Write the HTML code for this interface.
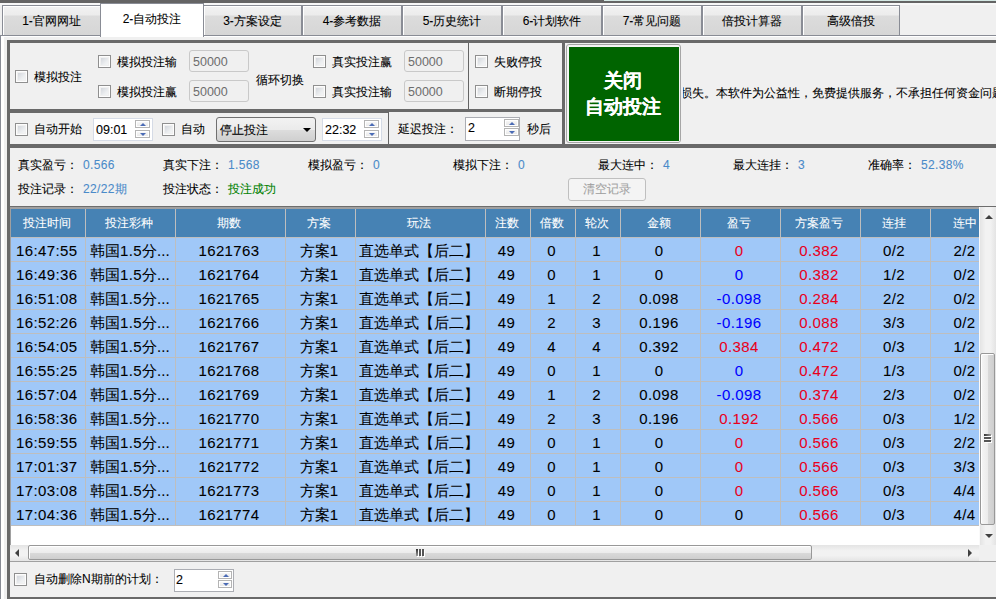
<!DOCTYPE html>
<html><head><meta charset="utf-8">
<style>
*{box-sizing:border-box;margin:0;padding:0}
html,body{width:996px;height:599px;overflow:hidden;background:#f0f0f0;font-family:"Liberation Sans",sans-serif;font-size:12px;color:#000;-webkit-text-stroke:0.08px currentColor}
.a{position:absolute}
.t{position:absolute;white-space:nowrap;line-height:14px}
.tab{position:absolute;top:5px;height:31px;border:1px solid #898c95;border-bottom:1px solid #898c95;background:linear-gradient(#f2f2f2 0,#ececec 9px,#dcdcdc 10px,#d6d6d6 100%);box-shadow:inset 1px 1px 0 #fff;text-align:center;line-height:31px}
.frm{position:absolute;background:#696969}
.cb{position:absolute;width:13px;height:13px;border:1px solid #8f8f8f;background:linear-gradient(135deg,#c8ccd3,#eceef0 60%,#fafafa);box-shadow:inset 0 0 0 1px #fdfdfd,inset 0 0 0 2px #f0f0f0}
.tb{position:absolute;height:22px;border:1px solid #c9c9c9;border-radius:3px;background:#f0f0f0;color:#6d6d6d;font-size:12.5px;line-height:22px;padding-left:3px;-webkit-text-stroke:0}
.spin{position:absolute;border:1px solid #d5dbe6;background:#fff;font-size:12.5px;line-height:22px;padding-left:2px;-webkit-text-stroke:0.1px currentColor}
.sb{position:absolute;width:15px;height:8px;border:1px solid #b4b4b4;background:linear-gradient(#fafafa,#e6e6e6);box-shadow:inset 0 0 0 1px #fff}
.up:after{content:"";position:absolute;left:4px;top:2px;border-left:3px solid transparent;border-right:3px solid transparent;border-bottom:3px solid #4a6bb5}
.dn:after{content:"";position:absolute;left:4px;top:2px;border-left:3px solid transparent;border-right:3px solid transparent;border-top:3px solid #4a6bb5}
.lbl{color:#000}
.val{color:#4a8ac9;letter-spacing:0.35px}
</style></head><body>
<!-- top dark band -->
<div class="a" style="left:0;top:0;width:996px;height:3px;background:#646464"></div>
<div class="a" style="left:0;top:3px;width:996px;height:2px;background:#f7f7f7"></div>
<div class="a" style="left:604px;top:0;width:392px;height:1px;background:#d4e8e4"></div>

<!-- tabs -->
<div class="tab" style="left:2px;width:99px">1-官网网址</div>
<div class="tab" style="left:203px;width:99px">3-方案设定</div>
<div class="tab" style="left:302px;width:100px">4-参考数据</div>
<div class="tab" style="left:402px;width:100px">5-历史统计</div>
<div class="tab" style="left:502px;width:100px">6-计划软件</div>
<div class="tab" style="left:602px;width:100px">7-常见问题</div>
<div class="tab" style="left:702px;width:100px">倍投计算器</div>
<div class="tab" style="left:802px;width:98px">高级倍投</div>
<!-- page border -->
<div class="a" style="left:0;top:35px;width:996px;height:1px;background:#898c95"></div>
<div class="a" style="left:0;top:35px;width:1px;height:564px;background:#898c95"></div>
<div class="a" style="left:1px;top:36px;width:995px;height:1px;background:#fff"></div>
<div class="a" style="left:1px;top:36px;width:3px;height:563px;background:#fff"></div>
<!-- active tab -->
<div class="a" style="left:100px;top:3px;width:104px;height:34px;background:#fff;border:1px solid #898c95;border-bottom:none;text-align:center;line-height:30px">2-自动投注</div>

<!-- top frame -->
<div class="frm" style="left:7px;top:40px;width:989px;height:3px"></div>
<div class="frm" style="left:7px;top:40px;width:3px;height:559px"></div>
<div class="frm" style="left:10px;top:109px;width:552px;height:3px"></div><div class="frm" style="left:10px;top:112px;width:378px;height:1px"></div>
<div class="frm" style="left:562px;top:40px;width:3px;height:107px"></div>
<div class="frm" style="left:7px;top:144px;width:989px;height:4px"></div>
<div class="frm" style="left:7px;top:597px;width:989px;height:2px"></div>


<!-- top panel row1 -->
<div class="cb" style="left:15px;top:70px"></div>
<div class="t" style="left:34px;top:70px">模拟投注</div>
<div class="cb" style="left:98px;top:55px"></div>
<div class="t" style="left:117px;top:55px">模拟投注输</div>
<div class="tb" style="left:189px;top:50px;width:60px">50000</div>
<div class="cb" style="left:98px;top:85px"></div>
<div class="t" style="left:117px;top:85px">模拟投注赢</div>
<div class="tb" style="left:189px;top:80px;width:60px">50000</div>
<div class="t" style="left:256px;top:73px">循环切换</div>
<div class="cb" style="left:313px;top:55px"></div>
<div class="t" style="left:332px;top:55px">真实投注赢</div>
<div class="tb" style="left:404px;top:50px;width:60px">50000</div>
<div class="cb" style="left:313px;top:85px"></div>
<div class="t" style="left:332px;top:85px">真实投注输</div>
<div class="tb" style="left:404px;top:80px;width:60px">50000</div>
<div class="a" style="left:468px;top:43px;width:1px;height:66px;background:#646464"></div>
<div class="cb" style="left:475px;top:55px"></div>
<div class="t" style="left:494px;top:55px">失败停投</div>
<div class="cb" style="left:475px;top:85px"></div>
<div class="t" style="left:494px;top:85px">断期停投</div>
<!-- top panel row2 -->
<div class="cb" style="left:15px;top:123px"></div>
<div class="t" style="left:34px;top:122px">自动开始</div>
<div class="spin" style="left:93px;top:118px;width:60px;height:23px">09:01</div>
<div class="sb up" style="left:135px;top:120px"></div>
<div class="sb dn" style="left:135px;top:130px"></div>
<div class="cb" style="left:162px;top:123px"></div>
<div class="t" style="left:181px;top:122px">自动</div>
<div class="a" style="left:216px;top:117px;width:100px;height:25px;border:1px solid #707070;border-radius:3px;background:linear-gradient(#f2f2f2,#ebebeb 50%,#dddddd 51%,#cfcfcf)"></div>
<div class="t" style="left:220px;top:123px;font-size:12px">停止投注</div>
<div class="a" style="left:303px;top:128px;border-left:4px solid transparent;border-right:4px solid transparent;border-top:4px solid #000"></div>
<div class="spin" style="left:322px;top:118px;width:60px;height:23px">22:32</div>
<div class="sb up" style="left:364px;top:120px"></div>
<div class="sb dn" style="left:364px;top:130px"></div>
<div class="a" style="left:388px;top:112px;width:1px;height:32px;background:#646464"></div>
<div class="t" style="left:398px;top:122px">延迟投注：</div>
<div class="spin" style="left:465px;top:117px;width:55px;height:24px;border-color:#abadb3;line-height:20px">2</div>
<div class="sb up" style="left:504px;top:119px"></div>
<div class="sb dn" style="left:504px;top:128px"></div>
<div class="t" style="left:527px;top:122px">秒后</div>
<!-- green button -->
<div class="a" style="left:566px;top:44px;width:115px;height:99px;border:1px solid #a6a6a6;border-radius:3px;background:#f4f4f4"></div>
<div class="a" style="left:569px;top:47px;width:110px;height:94px;background:#006400"></div>
<div class="t" style="left:568px;top:68px;width:110px;text-align:center;color:#fff;font-size:19px;font-weight:bold;line-height:26px">关闭<br>自动投注</div>
<div class="a" style="left:683px;top:43px;width:313px;height:101px;overflow:hidden"><div class="t" style="left:-3px;top:43px">损失。本软件为公益性，免费提供服务，不承担任何资金问题</div></div>

<!-- stats -->
<div class="t" style="left:18px;top:158px">真实盈亏：</div><div class="t val" style="left:83px;top:158px">0.566</div>
<div class="t" style="left:163px;top:158px">真实下注：</div><div class="t val" style="left:228px;top:158px">1.568</div>
<div class="t" style="left:308px;top:158px">模拟盈亏：</div><div class="t val" style="left:373px;top:158px">0</div>
<div class="t" style="left:453px;top:158px">模拟下注：</div><div class="t val" style="left:518px;top:158px">0</div>
<div class="t" style="left:598px;top:158px">最大连中：</div><div class="t val" style="left:663px;top:158px">4</div>
<div class="t" style="left:733px;top:158px">最大连挂：</div><div class="t val" style="left:798px;top:158px">3</div>
<div class="t" style="left:868px;top:158px">准确率：</div><div class="t val" style="left:921px;top:158px">52.38%</div>
<div class="t" style="left:18px;top:182px">投注记录：</div><div class="t val" style="left:83px;top:182px">22/22期</div>
<div class="t" style="left:163px;top:182px">投注状态：</div><div class="t" style="left:228px;top:182px;color:#008000">投注成功</div>
<div class="a" style="left:568px;top:178px;width:78px;height:23px;border:1px solid #bfbfbf;border-radius:3px;background:#f4f4f4;color:#a0a0a0;text-align:center;line-height:21px">清空记录</div>

<!-- table -->
<div class="a" style="left:10px;top:206px;width:969px;height:339px;background:#fff;overflow:hidden">
<div class="a" style="left:0;top:1px;width:969px;height:2px;background:#a0a0a0"></div>
<div class="a" style="left:0;top:0;width:1px;height:339px;background:#a0a0a0"></div>
<div class="a" style="left:1px;top:3px;width:968px;height:28px;background:#4682b4"></div>
<div class="a" style="left:1px;top:31px;width:968px;height:289px;background:#a0c8f8"></div>
<div class="t" style="left:-1px;top:10px;width:75px;text-align:center;color:#fff">投注时间</div>
<div class="t" style="left:74px;top:10px;width:90px;text-align:center;color:#fff">投注彩种</div>
<div class="t" style="left:164px;top:10px;width:110px;text-align:center;color:#fff">期数</div>
<div class="t" style="left:274px;top:10px;width:70px;text-align:center;color:#fff">方案</div>
<div class="t" style="left:344px;top:10px;width:130px;text-align:center;color:#fff">玩法</div>
<div class="t" style="left:474px;top:10px;width:45px;text-align:center;color:#fff">注数</div>
<div class="t" style="left:519px;top:10px;width:45px;text-align:center;color:#fff">倍数</div>
<div class="t" style="left:564px;top:10px;width:45px;text-align:center;color:#fff">轮次</div>
<div class="t" style="left:609px;top:10px;width:80px;text-align:center;color:#fff">金额</div>
<div class="t" style="left:689px;top:10px;width:80px;text-align:center;color:#fff">盈亏</div>
<div class="t" style="left:769px;top:10px;width:80px;text-align:center;color:#fff">方案盈亏</div>
<div class="t" style="left:849px;top:10px;width:70px;text-align:center;color:#fff">连挂</div>
<div class="t" style="left:919px;top:10px;width:71px;text-align:center;color:#fff">连中</div>
<div class="a" style="left:75px;top:3px;width:1px;height:317px;background:#bebebe"></div>
<div class="a" style="left:165px;top:3px;width:1px;height:317px;background:#bebebe"></div>
<div class="a" style="left:275px;top:3px;width:1px;height:317px;background:#bebebe"></div>
<div class="a" style="left:345px;top:3px;width:1px;height:317px;background:#bebebe"></div>
<div class="a" style="left:475px;top:3px;width:1px;height:317px;background:#bebebe"></div>
<div class="a" style="left:520px;top:3px;width:1px;height:317px;background:#bebebe"></div>
<div class="a" style="left:565px;top:3px;width:1px;height:317px;background:#bebebe"></div>
<div class="a" style="left:610px;top:3px;width:1px;height:317px;background:#bebebe"></div>
<div class="a" style="left:690px;top:3px;width:1px;height:317px;background:#bebebe"></div>
<div class="a" style="left:770px;top:3px;width:1px;height:317px;background:#bebebe"></div>
<div class="a" style="left:850px;top:3px;width:1px;height:317px;background:#bebebe"></div>
<div class="a" style="left:920px;top:3px;width:1px;height:317px;background:#bebebe"></div>
<div class="a" style="left:1px;top:31px;width:968px;height:1px;background:#bebebe"></div>
<div class="a" style="left:1px;top:55px;width:968px;height:1px;background:#bebebe"></div>
<div class="a" style="left:1px;top:79px;width:968px;height:1px;background:#bebebe"></div>
<div class="a" style="left:1px;top:103px;width:968px;height:1px;background:#bebebe"></div>
<div class="a" style="left:1px;top:127px;width:968px;height:1px;background:#bebebe"></div>
<div class="a" style="left:1px;top:151px;width:968px;height:1px;background:#bebebe"></div>
<div class="a" style="left:1px;top:175px;width:968px;height:1px;background:#bebebe"></div>
<div class="a" style="left:1px;top:199px;width:968px;height:1px;background:#bebebe"></div>
<div class="a" style="left:1px;top:223px;width:968px;height:1px;background:#bebebe"></div>
<div class="a" style="left:1px;top:247px;width:968px;height:1px;background:#bebebe"></div>
<div class="a" style="left:1px;top:271px;width:968px;height:1px;background:#bebebe"></div>
<div class="a" style="left:1px;top:295px;width:968px;height:1px;background:#bebebe"></div>
<div class="a" style="left:1px;top:319px;width:968px;height:1px;background:#bebebe"></div>
<div class="t" style="left:6px;top:33px;color:#000;font-size:15px;letter-spacing:0.4px;line-height:23px">16:47:55</div>
<div class="t" style="left:80px;top:33px;color:#000;font-size:15px;letter-spacing:0.4px;line-height:23px"><span style="letter-spacing:0">韩国</span>1.5<span style="letter-spacing:0">分...</span></div>
<div class="t" style="left:164px;top:33px;width:110px;text-align:center;color:#000;font-size:15px;letter-spacing:0.4px;line-height:23px">1621763</div>
<div class="t" style="left:274px;top:33px;width:70px;text-align:center;color:#000;font-size:15px;letter-spacing:0.4px;line-height:23px"><span style="letter-spacing:0">方案</span>1</div>
<div class="t" style="left:344px;top:33px;width:130px;text-align:center;color:#000;font-size:15px;letter-spacing:0.4px;line-height:23px"><span style="letter-spacing:0">直选单式【后二】</span></div>
<div class="t" style="left:474px;top:33px;width:45px;text-align:center;color:#000;font-size:15px;letter-spacing:0.4px;line-height:23px">49</div>
<div class="t" style="left:519px;top:33px;width:45px;text-align:center;color:#000;font-size:15px;letter-spacing:0.4px;line-height:23px">0</div>
<div class="t" style="left:564px;top:33px;width:45px;text-align:center;color:#000;font-size:15px;letter-spacing:0.4px;line-height:23px">1</div>
<div class="t" style="left:609px;top:33px;width:80px;text-align:center;color:#000;font-size:15px;letter-spacing:0.4px;line-height:23px">0</div>
<div class="t" style="left:689px;top:33px;width:80px;text-align:center;color:#e8001c;font-size:15px;letter-spacing:0.4px;line-height:23px">0</div>
<div class="t" style="left:769px;top:33px;width:80px;text-align:center;color:#e8001c;font-size:15px;letter-spacing:0.4px;line-height:23px">0.382</div>
<div class="t" style="left:849px;top:33px;width:70px;text-align:center;color:#000;font-size:15px;letter-spacing:0.4px;line-height:23px">0/2</div>
<div class="t" style="left:919px;top:33px;width:71px;text-align:center;color:#000;font-size:15px;letter-spacing:0.4px;line-height:23px">2/2</div>
<div class="t" style="left:6px;top:57px;color:#000;font-size:15px;letter-spacing:0.4px;line-height:23px">16:49:36</div>
<div class="t" style="left:80px;top:57px;color:#000;font-size:15px;letter-spacing:0.4px;line-height:23px"><span style="letter-spacing:0">韩国</span>1.5<span style="letter-spacing:0">分...</span></div>
<div class="t" style="left:164px;top:57px;width:110px;text-align:center;color:#000;font-size:15px;letter-spacing:0.4px;line-height:23px">1621764</div>
<div class="t" style="left:274px;top:57px;width:70px;text-align:center;color:#000;font-size:15px;letter-spacing:0.4px;line-height:23px"><span style="letter-spacing:0">方案</span>1</div>
<div class="t" style="left:344px;top:57px;width:130px;text-align:center;color:#000;font-size:15px;letter-spacing:0.4px;line-height:23px"><span style="letter-spacing:0">直选单式【后二】</span></div>
<div class="t" style="left:474px;top:57px;width:45px;text-align:center;color:#000;font-size:15px;letter-spacing:0.4px;line-height:23px">49</div>
<div class="t" style="left:519px;top:57px;width:45px;text-align:center;color:#000;font-size:15px;letter-spacing:0.4px;line-height:23px">0</div>
<div class="t" style="left:564px;top:57px;width:45px;text-align:center;color:#000;font-size:15px;letter-spacing:0.4px;line-height:23px">1</div>
<div class="t" style="left:609px;top:57px;width:80px;text-align:center;color:#000;font-size:15px;letter-spacing:0.4px;line-height:23px">0</div>
<div class="t" style="left:689px;top:57px;width:80px;text-align:center;color:#0000ff;font-size:15px;letter-spacing:0.4px;line-height:23px">0</div>
<div class="t" style="left:769px;top:57px;width:80px;text-align:center;color:#e8001c;font-size:15px;letter-spacing:0.4px;line-height:23px">0.382</div>
<div class="t" style="left:849px;top:57px;width:70px;text-align:center;color:#000;font-size:15px;letter-spacing:0.4px;line-height:23px">1/2</div>
<div class="t" style="left:919px;top:57px;width:71px;text-align:center;color:#000;font-size:15px;letter-spacing:0.4px;line-height:23px">0/2</div>
<div class="t" style="left:6px;top:81px;color:#000;font-size:15px;letter-spacing:0.4px;line-height:23px">16:51:08</div>
<div class="t" style="left:80px;top:81px;color:#000;font-size:15px;letter-spacing:0.4px;line-height:23px"><span style="letter-spacing:0">韩国</span>1.5<span style="letter-spacing:0">分...</span></div>
<div class="t" style="left:164px;top:81px;width:110px;text-align:center;color:#000;font-size:15px;letter-spacing:0.4px;line-height:23px">1621765</div>
<div class="t" style="left:274px;top:81px;width:70px;text-align:center;color:#000;font-size:15px;letter-spacing:0.4px;line-height:23px"><span style="letter-spacing:0">方案</span>1</div>
<div class="t" style="left:344px;top:81px;width:130px;text-align:center;color:#000;font-size:15px;letter-spacing:0.4px;line-height:23px"><span style="letter-spacing:0">直选单式【后二】</span></div>
<div class="t" style="left:474px;top:81px;width:45px;text-align:center;color:#000;font-size:15px;letter-spacing:0.4px;line-height:23px">49</div>
<div class="t" style="left:519px;top:81px;width:45px;text-align:center;color:#000;font-size:15px;letter-spacing:0.4px;line-height:23px">1</div>
<div class="t" style="left:564px;top:81px;width:45px;text-align:center;color:#000;font-size:15px;letter-spacing:0.4px;line-height:23px">2</div>
<div class="t" style="left:609px;top:81px;width:80px;text-align:center;color:#000;font-size:15px;letter-spacing:0.4px;line-height:23px">0.098</div>
<div class="t" style="left:689px;top:81px;width:80px;text-align:center;color:#0000ff;font-size:15px;letter-spacing:0.4px;line-height:23px">-0.098</div>
<div class="t" style="left:769px;top:81px;width:80px;text-align:center;color:#e8001c;font-size:15px;letter-spacing:0.4px;line-height:23px">0.284</div>
<div class="t" style="left:849px;top:81px;width:70px;text-align:center;color:#000;font-size:15px;letter-spacing:0.4px;line-height:23px">2/2</div>
<div class="t" style="left:919px;top:81px;width:71px;text-align:center;color:#000;font-size:15px;letter-spacing:0.4px;line-height:23px">0/2</div>
<div class="t" style="left:6px;top:105px;color:#000;font-size:15px;letter-spacing:0.4px;line-height:23px">16:52:26</div>
<div class="t" style="left:80px;top:105px;color:#000;font-size:15px;letter-spacing:0.4px;line-height:23px"><span style="letter-spacing:0">韩国</span>1.5<span style="letter-spacing:0">分...</span></div>
<div class="t" style="left:164px;top:105px;width:110px;text-align:center;color:#000;font-size:15px;letter-spacing:0.4px;line-height:23px">1621766</div>
<div class="t" style="left:274px;top:105px;width:70px;text-align:center;color:#000;font-size:15px;letter-spacing:0.4px;line-height:23px"><span style="letter-spacing:0">方案</span>1</div>
<div class="t" style="left:344px;top:105px;width:130px;text-align:center;color:#000;font-size:15px;letter-spacing:0.4px;line-height:23px"><span style="letter-spacing:0">直选单式【后二】</span></div>
<div class="t" style="left:474px;top:105px;width:45px;text-align:center;color:#000;font-size:15px;letter-spacing:0.4px;line-height:23px">49</div>
<div class="t" style="left:519px;top:105px;width:45px;text-align:center;color:#000;font-size:15px;letter-spacing:0.4px;line-height:23px">2</div>
<div class="t" style="left:564px;top:105px;width:45px;text-align:center;color:#000;font-size:15px;letter-spacing:0.4px;line-height:23px">3</div>
<div class="t" style="left:609px;top:105px;width:80px;text-align:center;color:#000;font-size:15px;letter-spacing:0.4px;line-height:23px">0.196</div>
<div class="t" style="left:689px;top:105px;width:80px;text-align:center;color:#0000ff;font-size:15px;letter-spacing:0.4px;line-height:23px">-0.196</div>
<div class="t" style="left:769px;top:105px;width:80px;text-align:center;color:#e8001c;font-size:15px;letter-spacing:0.4px;line-height:23px">0.088</div>
<div class="t" style="left:849px;top:105px;width:70px;text-align:center;color:#000;font-size:15px;letter-spacing:0.4px;line-height:23px">3/3</div>
<div class="t" style="left:919px;top:105px;width:71px;text-align:center;color:#000;font-size:15px;letter-spacing:0.4px;line-height:23px">0/2</div>
<div class="t" style="left:6px;top:129px;color:#000;font-size:15px;letter-spacing:0.4px;line-height:23px">16:54:05</div>
<div class="t" style="left:80px;top:129px;color:#000;font-size:15px;letter-spacing:0.4px;line-height:23px"><span style="letter-spacing:0">韩国</span>1.5<span style="letter-spacing:0">分...</span></div>
<div class="t" style="left:164px;top:129px;width:110px;text-align:center;color:#000;font-size:15px;letter-spacing:0.4px;line-height:23px">1621767</div>
<div class="t" style="left:274px;top:129px;width:70px;text-align:center;color:#000;font-size:15px;letter-spacing:0.4px;line-height:23px"><span style="letter-spacing:0">方案</span>1</div>
<div class="t" style="left:344px;top:129px;width:130px;text-align:center;color:#000;font-size:15px;letter-spacing:0.4px;line-height:23px"><span style="letter-spacing:0">直选单式【后二】</span></div>
<div class="t" style="left:474px;top:129px;width:45px;text-align:center;color:#000;font-size:15px;letter-spacing:0.4px;line-height:23px">49</div>
<div class="t" style="left:519px;top:129px;width:45px;text-align:center;color:#000;font-size:15px;letter-spacing:0.4px;line-height:23px">4</div>
<div class="t" style="left:564px;top:129px;width:45px;text-align:center;color:#000;font-size:15px;letter-spacing:0.4px;line-height:23px">4</div>
<div class="t" style="left:609px;top:129px;width:80px;text-align:center;color:#000;font-size:15px;letter-spacing:0.4px;line-height:23px">0.392</div>
<div class="t" style="left:689px;top:129px;width:80px;text-align:center;color:#e8001c;font-size:15px;letter-spacing:0.4px;line-height:23px">0.384</div>
<div class="t" style="left:769px;top:129px;width:80px;text-align:center;color:#e8001c;font-size:15px;letter-spacing:0.4px;line-height:23px">0.472</div>
<div class="t" style="left:849px;top:129px;width:70px;text-align:center;color:#000;font-size:15px;letter-spacing:0.4px;line-height:23px">0/3</div>
<div class="t" style="left:919px;top:129px;width:71px;text-align:center;color:#000;font-size:15px;letter-spacing:0.4px;line-height:23px">1/2</div>
<div class="t" style="left:6px;top:153px;color:#000;font-size:15px;letter-spacing:0.4px;line-height:23px">16:55:25</div>
<div class="t" style="left:80px;top:153px;color:#000;font-size:15px;letter-spacing:0.4px;line-height:23px"><span style="letter-spacing:0">韩国</span>1.5<span style="letter-spacing:0">分...</span></div>
<div class="t" style="left:164px;top:153px;width:110px;text-align:center;color:#000;font-size:15px;letter-spacing:0.4px;line-height:23px">1621768</div>
<div class="t" style="left:274px;top:153px;width:70px;text-align:center;color:#000;font-size:15px;letter-spacing:0.4px;line-height:23px"><span style="letter-spacing:0">方案</span>1</div>
<div class="t" style="left:344px;top:153px;width:130px;text-align:center;color:#000;font-size:15px;letter-spacing:0.4px;line-height:23px"><span style="letter-spacing:0">直选单式【后二】</span></div>
<div class="t" style="left:474px;top:153px;width:45px;text-align:center;color:#000;font-size:15px;letter-spacing:0.4px;line-height:23px">49</div>
<div class="t" style="left:519px;top:153px;width:45px;text-align:center;color:#000;font-size:15px;letter-spacing:0.4px;line-height:23px">0</div>
<div class="t" style="left:564px;top:153px;width:45px;text-align:center;color:#000;font-size:15px;letter-spacing:0.4px;line-height:23px">1</div>
<div class="t" style="left:609px;top:153px;width:80px;text-align:center;color:#000;font-size:15px;letter-spacing:0.4px;line-height:23px">0</div>
<div class="t" style="left:689px;top:153px;width:80px;text-align:center;color:#0000ff;font-size:15px;letter-spacing:0.4px;line-height:23px">0</div>
<div class="t" style="left:769px;top:153px;width:80px;text-align:center;color:#e8001c;font-size:15px;letter-spacing:0.4px;line-height:23px">0.472</div>
<div class="t" style="left:849px;top:153px;width:70px;text-align:center;color:#000;font-size:15px;letter-spacing:0.4px;line-height:23px">1/3</div>
<div class="t" style="left:919px;top:153px;width:71px;text-align:center;color:#000;font-size:15px;letter-spacing:0.4px;line-height:23px">0/2</div>
<div class="t" style="left:6px;top:177px;color:#000;font-size:15px;letter-spacing:0.4px;line-height:23px">16:57:04</div>
<div class="t" style="left:80px;top:177px;color:#000;font-size:15px;letter-spacing:0.4px;line-height:23px"><span style="letter-spacing:0">韩国</span>1.5<span style="letter-spacing:0">分...</span></div>
<div class="t" style="left:164px;top:177px;width:110px;text-align:center;color:#000;font-size:15px;letter-spacing:0.4px;line-height:23px">1621769</div>
<div class="t" style="left:274px;top:177px;width:70px;text-align:center;color:#000;font-size:15px;letter-spacing:0.4px;line-height:23px"><span style="letter-spacing:0">方案</span>1</div>
<div class="t" style="left:344px;top:177px;width:130px;text-align:center;color:#000;font-size:15px;letter-spacing:0.4px;line-height:23px"><span style="letter-spacing:0">直选单式【后二】</span></div>
<div class="t" style="left:474px;top:177px;width:45px;text-align:center;color:#000;font-size:15px;letter-spacing:0.4px;line-height:23px">49</div>
<div class="t" style="left:519px;top:177px;width:45px;text-align:center;color:#000;font-size:15px;letter-spacing:0.4px;line-height:23px">1</div>
<div class="t" style="left:564px;top:177px;width:45px;text-align:center;color:#000;font-size:15px;letter-spacing:0.4px;line-height:23px">2</div>
<div class="t" style="left:609px;top:177px;width:80px;text-align:center;color:#000;font-size:15px;letter-spacing:0.4px;line-height:23px">0.098</div>
<div class="t" style="left:689px;top:177px;width:80px;text-align:center;color:#0000ff;font-size:15px;letter-spacing:0.4px;line-height:23px">-0.098</div>
<div class="t" style="left:769px;top:177px;width:80px;text-align:center;color:#e8001c;font-size:15px;letter-spacing:0.4px;line-height:23px">0.374</div>
<div class="t" style="left:849px;top:177px;width:70px;text-align:center;color:#000;font-size:15px;letter-spacing:0.4px;line-height:23px">2/3</div>
<div class="t" style="left:919px;top:177px;width:71px;text-align:center;color:#000;font-size:15px;letter-spacing:0.4px;line-height:23px">0/2</div>
<div class="t" style="left:6px;top:201px;color:#000;font-size:15px;letter-spacing:0.4px;line-height:23px">16:58:36</div>
<div class="t" style="left:80px;top:201px;color:#000;font-size:15px;letter-spacing:0.4px;line-height:23px"><span style="letter-spacing:0">韩国</span>1.5<span style="letter-spacing:0">分...</span></div>
<div class="t" style="left:164px;top:201px;width:110px;text-align:center;color:#000;font-size:15px;letter-spacing:0.4px;line-height:23px">1621770</div>
<div class="t" style="left:274px;top:201px;width:70px;text-align:center;color:#000;font-size:15px;letter-spacing:0.4px;line-height:23px"><span style="letter-spacing:0">方案</span>1</div>
<div class="t" style="left:344px;top:201px;width:130px;text-align:center;color:#000;font-size:15px;letter-spacing:0.4px;line-height:23px"><span style="letter-spacing:0">直选单式【后二】</span></div>
<div class="t" style="left:474px;top:201px;width:45px;text-align:center;color:#000;font-size:15px;letter-spacing:0.4px;line-height:23px">49</div>
<div class="t" style="left:519px;top:201px;width:45px;text-align:center;color:#000;font-size:15px;letter-spacing:0.4px;line-height:23px">2</div>
<div class="t" style="left:564px;top:201px;width:45px;text-align:center;color:#000;font-size:15px;letter-spacing:0.4px;line-height:23px">3</div>
<div class="t" style="left:609px;top:201px;width:80px;text-align:center;color:#000;font-size:15px;letter-spacing:0.4px;line-height:23px">0.196</div>
<div class="t" style="left:689px;top:201px;width:80px;text-align:center;color:#e8001c;font-size:15px;letter-spacing:0.4px;line-height:23px">0.192</div>
<div class="t" style="left:769px;top:201px;width:80px;text-align:center;color:#e8001c;font-size:15px;letter-spacing:0.4px;line-height:23px">0.566</div>
<div class="t" style="left:849px;top:201px;width:70px;text-align:center;color:#000;font-size:15px;letter-spacing:0.4px;line-height:23px">0/3</div>
<div class="t" style="left:919px;top:201px;width:71px;text-align:center;color:#000;font-size:15px;letter-spacing:0.4px;line-height:23px">1/2</div>
<div class="t" style="left:6px;top:225px;color:#000;font-size:15px;letter-spacing:0.4px;line-height:23px">16:59:55</div>
<div class="t" style="left:80px;top:225px;color:#000;font-size:15px;letter-spacing:0.4px;line-height:23px"><span style="letter-spacing:0">韩国</span>1.5<span style="letter-spacing:0">分...</span></div>
<div class="t" style="left:164px;top:225px;width:110px;text-align:center;color:#000;font-size:15px;letter-spacing:0.4px;line-height:23px">1621771</div>
<div class="t" style="left:274px;top:225px;width:70px;text-align:center;color:#000;font-size:15px;letter-spacing:0.4px;line-height:23px"><span style="letter-spacing:0">方案</span>1</div>
<div class="t" style="left:344px;top:225px;width:130px;text-align:center;color:#000;font-size:15px;letter-spacing:0.4px;line-height:23px"><span style="letter-spacing:0">直选单式【后二】</span></div>
<div class="t" style="left:474px;top:225px;width:45px;text-align:center;color:#000;font-size:15px;letter-spacing:0.4px;line-height:23px">49</div>
<div class="t" style="left:519px;top:225px;width:45px;text-align:center;color:#000;font-size:15px;letter-spacing:0.4px;line-height:23px">0</div>
<div class="t" style="left:564px;top:225px;width:45px;text-align:center;color:#000;font-size:15px;letter-spacing:0.4px;line-height:23px">1</div>
<div class="t" style="left:609px;top:225px;width:80px;text-align:center;color:#000;font-size:15px;letter-spacing:0.4px;line-height:23px">0</div>
<div class="t" style="left:689px;top:225px;width:80px;text-align:center;color:#e8001c;font-size:15px;letter-spacing:0.4px;line-height:23px">0</div>
<div class="t" style="left:769px;top:225px;width:80px;text-align:center;color:#e8001c;font-size:15px;letter-spacing:0.4px;line-height:23px">0.566</div>
<div class="t" style="left:849px;top:225px;width:70px;text-align:center;color:#000;font-size:15px;letter-spacing:0.4px;line-height:23px">0/3</div>
<div class="t" style="left:919px;top:225px;width:71px;text-align:center;color:#000;font-size:15px;letter-spacing:0.4px;line-height:23px">2/2</div>
<div class="t" style="left:6px;top:249px;color:#000;font-size:15px;letter-spacing:0.4px;line-height:23px">17:01:37</div>
<div class="t" style="left:80px;top:249px;color:#000;font-size:15px;letter-spacing:0.4px;line-height:23px"><span style="letter-spacing:0">韩国</span>1.5<span style="letter-spacing:0">分...</span></div>
<div class="t" style="left:164px;top:249px;width:110px;text-align:center;color:#000;font-size:15px;letter-spacing:0.4px;line-height:23px">1621772</div>
<div class="t" style="left:274px;top:249px;width:70px;text-align:center;color:#000;font-size:15px;letter-spacing:0.4px;line-height:23px"><span style="letter-spacing:0">方案</span>1</div>
<div class="t" style="left:344px;top:249px;width:130px;text-align:center;color:#000;font-size:15px;letter-spacing:0.4px;line-height:23px"><span style="letter-spacing:0">直选单式【后二】</span></div>
<div class="t" style="left:474px;top:249px;width:45px;text-align:center;color:#000;font-size:15px;letter-spacing:0.4px;line-height:23px">49</div>
<div class="t" style="left:519px;top:249px;width:45px;text-align:center;color:#000;font-size:15px;letter-spacing:0.4px;line-height:23px">0</div>
<div class="t" style="left:564px;top:249px;width:45px;text-align:center;color:#000;font-size:15px;letter-spacing:0.4px;line-height:23px">1</div>
<div class="t" style="left:609px;top:249px;width:80px;text-align:center;color:#000;font-size:15px;letter-spacing:0.4px;line-height:23px">0</div>
<div class="t" style="left:689px;top:249px;width:80px;text-align:center;color:#e8001c;font-size:15px;letter-spacing:0.4px;line-height:23px">0</div>
<div class="t" style="left:769px;top:249px;width:80px;text-align:center;color:#e8001c;font-size:15px;letter-spacing:0.4px;line-height:23px">0.566</div>
<div class="t" style="left:849px;top:249px;width:70px;text-align:center;color:#000;font-size:15px;letter-spacing:0.4px;line-height:23px">0/3</div>
<div class="t" style="left:919px;top:249px;width:71px;text-align:center;color:#000;font-size:15px;letter-spacing:0.4px;line-height:23px">3/3</div>
<div class="t" style="left:6px;top:273px;color:#000;font-size:15px;letter-spacing:0.4px;line-height:23px">17:03:08</div>
<div class="t" style="left:80px;top:273px;color:#000;font-size:15px;letter-spacing:0.4px;line-height:23px"><span style="letter-spacing:0">韩国</span>1.5<span style="letter-spacing:0">分...</span></div>
<div class="t" style="left:164px;top:273px;width:110px;text-align:center;color:#000;font-size:15px;letter-spacing:0.4px;line-height:23px">1621773</div>
<div class="t" style="left:274px;top:273px;width:70px;text-align:center;color:#000;font-size:15px;letter-spacing:0.4px;line-height:23px"><span style="letter-spacing:0">方案</span>1</div>
<div class="t" style="left:344px;top:273px;width:130px;text-align:center;color:#000;font-size:15px;letter-spacing:0.4px;line-height:23px"><span style="letter-spacing:0">直选单式【后二】</span></div>
<div class="t" style="left:474px;top:273px;width:45px;text-align:center;color:#000;font-size:15px;letter-spacing:0.4px;line-height:23px">49</div>
<div class="t" style="left:519px;top:273px;width:45px;text-align:center;color:#000;font-size:15px;letter-spacing:0.4px;line-height:23px">0</div>
<div class="t" style="left:564px;top:273px;width:45px;text-align:center;color:#000;font-size:15px;letter-spacing:0.4px;line-height:23px">1</div>
<div class="t" style="left:609px;top:273px;width:80px;text-align:center;color:#000;font-size:15px;letter-spacing:0.4px;line-height:23px">0</div>
<div class="t" style="left:689px;top:273px;width:80px;text-align:center;color:#e8001c;font-size:15px;letter-spacing:0.4px;line-height:23px">0</div>
<div class="t" style="left:769px;top:273px;width:80px;text-align:center;color:#e8001c;font-size:15px;letter-spacing:0.4px;line-height:23px">0.566</div>
<div class="t" style="left:849px;top:273px;width:70px;text-align:center;color:#000;font-size:15px;letter-spacing:0.4px;line-height:23px">0/3</div>
<div class="t" style="left:919px;top:273px;width:71px;text-align:center;color:#000;font-size:15px;letter-spacing:0.4px;line-height:23px">4/4</div>
<div class="t" style="left:6px;top:297px;color:#000;font-size:15px;letter-spacing:0.4px;line-height:23px">17:04:36</div>
<div class="t" style="left:80px;top:297px;color:#000;font-size:15px;letter-spacing:0.4px;line-height:23px"><span style="letter-spacing:0">韩国</span>1.5<span style="letter-spacing:0">分...</span></div>
<div class="t" style="left:164px;top:297px;width:110px;text-align:center;color:#000;font-size:15px;letter-spacing:0.4px;line-height:23px">1621774</div>
<div class="t" style="left:274px;top:297px;width:70px;text-align:center;color:#000;font-size:15px;letter-spacing:0.4px;line-height:23px"><span style="letter-spacing:0">方案</span>1</div>
<div class="t" style="left:344px;top:297px;width:130px;text-align:center;color:#000;font-size:15px;letter-spacing:0.4px;line-height:23px"><span style="letter-spacing:0">直选单式【后二】</span></div>
<div class="t" style="left:474px;top:297px;width:45px;text-align:center;color:#000;font-size:15px;letter-spacing:0.4px;line-height:23px">49</div>
<div class="t" style="left:519px;top:297px;width:45px;text-align:center;color:#000;font-size:15px;letter-spacing:0.4px;line-height:23px">0</div>
<div class="t" style="left:564px;top:297px;width:45px;text-align:center;color:#000;font-size:15px;letter-spacing:0.4px;line-height:23px">1</div>
<div class="t" style="left:609px;top:297px;width:80px;text-align:center;color:#000;font-size:15px;letter-spacing:0.4px;line-height:23px">0</div>
<div class="t" style="left:689px;top:297px;width:80px;text-align:center;color:#000;font-size:15px;letter-spacing:0.4px;line-height:23px">0</div>
<div class="t" style="left:769px;top:297px;width:80px;text-align:center;color:#e8001c;font-size:15px;letter-spacing:0.4px;line-height:23px">0.566</div>
<div class="t" style="left:849px;top:297px;width:70px;text-align:center;color:#000;font-size:15px;letter-spacing:0.4px;line-height:23px">0/3</div>
<div class="t" style="left:919px;top:297px;width:71px;text-align:center;color:#000;font-size:15px;letter-spacing:0.4px;line-height:23px">4/4</div>
</div>
<div class="a" style="left:10px;top:206px;width:986px;height:1px;background:#6d6d6d"></div>
<!-- v scrollbar -->
<div class="a" style="left:979px;top:207px;width:17px;height:338px;background:linear-gradient(90deg,#e4e4e4,#f2f2f2 35%,#f2f2f2 65%,#e4e4e4);border-left:1px solid #fafafa"></div>
<div class="a" style="left:985px;top:215px;border-left:4px solid transparent;border-right:4px solid transparent;border-bottom:4px solid #404040"></div>
<div class="a" style="left:985px;top:534px;border-left:4px solid transparent;border-right:4px solid transparent;border-top:4px solid #404040"></div>
<div class="a" style="left:980px;top:353px;width:15px;height:172px;border:1px solid #989898;border-radius:2px;background:linear-gradient(90deg,#f6f6f6,#ececec 50%,#dadada 52%,#cecece);box-shadow:inset 1px 1px 0 #fff"></div><div class="a" style="left:984px;top:434px;width:7px;height:2px;background:linear-gradient(90deg,#333,#999);box-shadow:0 3px 0 #555,0 6px 0 #555,1px 1px 0 #fff,1px 4px 0 #fff,1px 7px 0 #fff"></div>
<!-- h scrollbar -->
<div class="a" style="left:10px;top:545px;width:969px;height:16px;background:linear-gradient(#e4e4e4,#f2f2f2 35%,#f2f2f2 65%,#e4e4e4)"></div>
<div class="a" style="left:15px;top:549px;border-top:4px solid transparent;border-bottom:4px solid transparent;border-right:4px solid #404040"></div>
<div class="a" style="left:968px;top:549px;border-top:4px solid transparent;border-bottom:4px solid transparent;border-left:4px solid #404040"></div>
<div class="a" style="left:28px;top:545px;width:784px;height:15px;border:1px solid #989898;border-radius:2px;background:linear-gradient(#f6f6f6,#ececec 50%,#dadada 52%,#cecece);box-shadow:inset 1px 1px 0 #fff"></div><div class="a" style="left:416px;top:549px;width:2px;height:7px;background:linear-gradient(#333,#999);box-shadow:3px 0 0 #555,6px 0 0 #555,1px 1px 0 #fff,4px 1px 0 #fff,7px 1px 0 #fff"></div>
<div class="a" style="left:10px;top:561px;width:986px;height:1px;background:#a0a0a0"></div>
<!-- bottom -->
<div class="cb" style="left:14px;top:573px"></div>
<div class="t" style="left:34px;top:572px">自动删除N期前的计划：</div>
<div class="spin" style="left:174px;top:569px;width:60px;height:23px;border-color:#abadb3;line-height:20px;padding-left:1px">2</div>
<div class="sb up" style="left:218px;top:571px;width:14px"></div>
<div class="sb dn" style="left:218px;top:580px;width:14px"></div>
</body></html>
